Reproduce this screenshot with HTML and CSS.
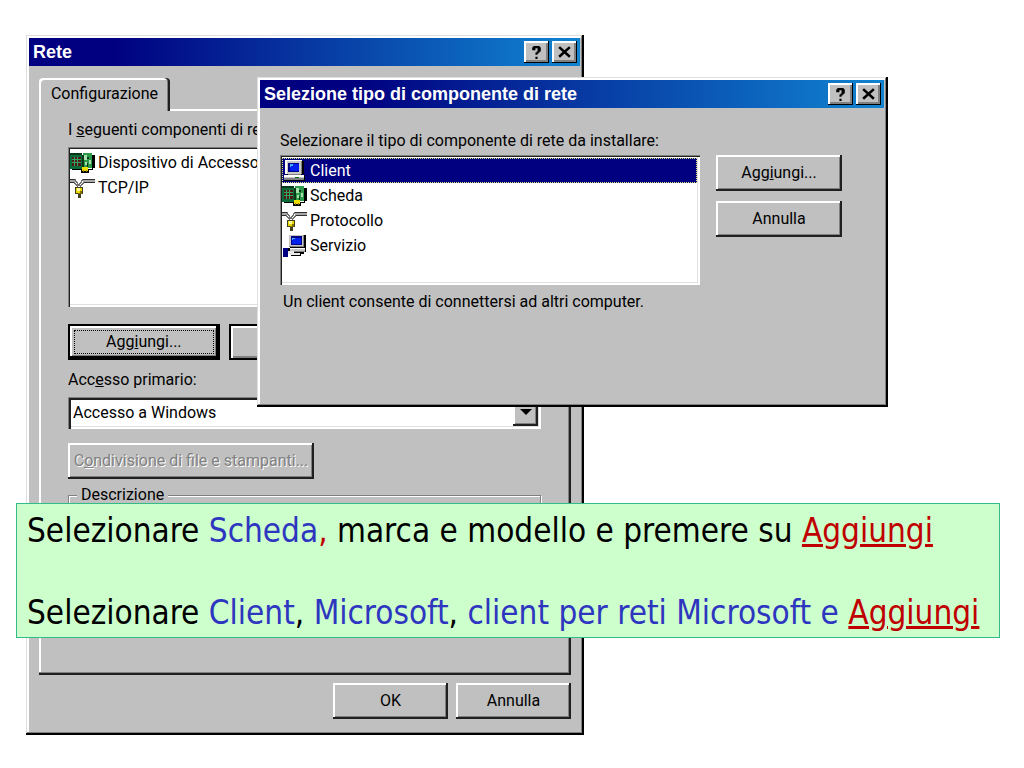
FILE: index.html
```html
<!DOCTYPE html>
<html lang="it">
<head>
<meta charset="utf-8">
<title>Configurazione di rete</title>
<link rel="stylesheet" href="styles.css">
</head>
<body>
<svg class="defs" aria-hidden="true">
  <symbol id="i-card" viewBox="0 0 25 20">
    <path fill="#000" d="M22 2h3v13h-2v2h-4v3h-8v-3H2v-1h20z"/>
    <path fill="#0a6a38" d="M0 0h12v16H0z"/>
    <path fill="#2c9a48" d="M13 0h9v15h-9z"/>
    <path fill="#063818" d="M0 0h12v2H0zM12 2h2v14h-2z"/>
    <path fill="#501818" d="M2 4h9v9H2z"/>
    <path fill="#30a860" d="M4 4h1v9H4zM7 4h1v9H7zM2 6h9v1H2zM2 9h9v1H2z"/>
    <path fill="#a8e0b0" d="M14 2h3v5h-3zM19 7h2v4h-2zM15 9h2v3h-2z"/>
    <path fill="#063818" d="M17 4h2v2h-2zM17 10h1v4h-1z"/>
    <path fill="#f0e000" d="M12 14h6v4h-6z"/>
    <path fill="#907800" d="M13 17h1v2h-1zM16 17h1v2h-1z"/>
  </symbol>
  <symbol id="i-protocol" viewBox="0 0 25 20">
    <path fill="#303030" d="M0 1h6v1H0zM12 1h13v1H12zM0 4h5v1H0zM14 4h11v1H14z"/>
    <path fill="#a8a8a8" d="M0 2h6v2H0zM13 2h12v2H13z"/>
    <path fill="none" stroke="#707070" stroke-width="1.4" d="M5 2l4 6M13 2L9 8M4 5l4 4M14 5l-4 4"/>
    <path fill="#404020" d="M5 9h8v7H5zM8 16h3v4H8z"/>
    <path fill="#e8d800" d="M6 10h6v5H6z"/>
    <path fill="#fff8a0" d="M7 10h3v3H7z"/>
    <path fill="#807000" d="M10 13h2v3H8v-1h2z"/>
  </symbol>
  <symbol id="i-client" viewBox="0 0 16 14">
    <path fill="#000" d="M13 1h1v8h-1zM3 9h10v1H3zM14 10h1v3h-1zM1 13h14v1H1z"/>
    <path fill="#c8c8c8" d="M2 0h11v9H2zM1 10h13v3H1z"/>
    <path fill="#fff" d="M2 0h11v1H2zM2 0h1v9H2zM1 10h13v1H1z"/>
    <path fill="#808080" d="M12 1h1v8h-1zM4 9h8v1H4zM1 12h13v1H1z"/>
    <path fill="#000080" d="M4 2h7v6H4z"/>
    <path fill="#0020f0" d="M5 3h6v4H5z"/>
    <path fill="#40b0ff" d="M5 3h2v1H5zM5 4h1v1H5z"/>
    <path fill="#107010" d="M8 11h3v1H8z"/>
  </symbol>
  <symbol id="i-service" viewBox="0 0 25 24">
    <path fill="#000" d="M22 1h2v12h1v6h-3v2h-3v2H9v-2H6v-4H4v-2h4v-2z"/>
    <path fill="#c8c8c8" d="M6 0h16v14H6zM8 15h15v4H8z"/>
    <path fill="#fff" d="M6 0h16v1H6zM6 0h1v14H6zM8 15h15v1H8z"/>
    <path fill="#808080" d="M21 1h1v13h-1zM7 13h15v1H7zM12 18h11v1H12z"/>
    <path fill="#000080" d="M9 2h11v9H9z"/>
    <path fill="#0020f0" d="M10 4h9v6h-9z"/>
    <path fill="#40b0ff" d="M10 4h3v1h-3zM10 5h1v1h-1z"/>
    <path fill="#000080" d="M0 15h6v9H0z"/>
    <path fill="#e8e8e8" d="M6 18h6v2h6v2H8v-1H6z"/>
  </symbol>
  <symbol id="i-help" viewBox="0 0 14 14">
    <path fill="#000" d="M4 1h6v1h1v4h-1v1H9v1H8v1H6V7h1V6h1V3H6v2H3V2h1zM6 11h2v2H6z"/>
  </symbol>
  <symbol id="i-close" viewBox="0 0 14 14">
    <path stroke="#000" stroke-width="2.4" fill="none" d="M2 2l10 9M12 2L2 11"/>
  </symbol>
</svg>

<main class="desktop">
  <section class="window window-network" aria-label="Rete">
    <header class="titlebar">
      <h1 class="title">Rete</h1>
      <button class="caption" aria-label="Guida"><svg class="glyph"><use href="#i-help"/></svg></button>
      <button class="caption" aria-label="Chiudi"><svg class="glyph"><use href="#i-close"/></svg></button>
    </header>
    <div class="network-body">
      <div class="tabs" role="tablist"><button class="tab" role="tab" aria-selected="true">Configurazione</button></div>
      <div class="panel" role="tabpanel">
        <p class="text" id="components"><span>I <u>s</u>eguenti componenti di rete</span></p>
        <ul class="list list-network" role="listbox" aria-labelledby="components">
          <li class="item" role="option"><svg class="icon"><use href="#i-card"/></svg>Dispositivo di Accesso</li>
          <li class="item" role="option"><svg class="icon"><use href="#i-protocol"/></svg>TCP/IP</li>
        </ul>
        <div class="actions">
          <button class="button default"><span class="focus">Agg<u>i</u>ungi...</span></button>
          <button class="button framed" aria-label="Rimuovi"></button>
          <button class="button framed" aria-label="Proprietà"></button>
        </div>
        <label class="text" for="logon">Acc<u>e</u>sso primario:</label>
        <div class="combo">
          <select class="select" id="logon"><option>Accesso a Windows</option></select>
          <span class="arrow"></span>
        </div>
        <button class="button share" disabled>C<u>o</u>ndivisione di file e stampanti...</button>
        <fieldset class="group"><legend>Descrizione</legend></fieldset>
      </div>
      <footer class="footer">
        <button class="button">OK</button>
        <button class="button">Annulla</button>
      </footer>
    </div>
  </section>

  <section class="window window-component" aria-label="Selezione tipo di componente di rete">
    <header class="titlebar">
      <h2 class="title">Selezione tipo di componente di rete</h2>
      <button class="caption" aria-label="Guida"><svg class="glyph"><use href="#i-help"/></svg></button>
      <button class="caption" aria-label="Chiudi"><svg class="glyph"><use href="#i-close"/></svg></button>
    </header>
    <div class="component-body">
      <p class="text" id="types">Selezionare il tipo di componente di rete da installare:</p>
      <div class="component-row">
        <ul class="list list-types" role="listbox" aria-labelledby="types">
          <li class="item selected" role="option" aria-selected="true"><svg class="icon"><use href="#i-client"/></svg>Client</li>
          <li class="item" role="option"><svg class="icon"><use href="#i-card"/></svg>Scheda</li>
          <li class="item" role="option"><svg class="icon"><use href="#i-protocol"/></svg>Protocollo</li>
          <li class="item" role="option"><svg class="icon"><use href="#i-service"/></svg>Servizio</li>
        </ul>
        <div class="stack">
          <button class="button">Agg<u>i</u>ungi...</button>
          <button class="button">Annulla</button>
        </div>
      </div>
      <p class="text hint">Un client consente di connettersi ad altri computer.</p>
    </div>
  </section>

  <aside class="note">
    <p>Selezionare <span class="blue">Scheda</span><span class="red">,</span> marca e modello e premere su <u class="red">Aggiungi</u></p>
    <p>Selezionare <span class="blue">Client</span>, <span class="blue">Microsoft</span>, <span class="blue">client per reti Microsoft e</span> <u class="red">Aggiungi</u></p>
  </aside>
</main>
</body>
</html>
```

FILE: styles.css
```css
* { box-sizing: border-box; }

body {
  margin: 0;
  background: #fff;
  color: #000;
  font: 16px/24px Roboto, "Liberation Sans", sans-serif;
}

h1, h2, p, ul { margin: 0; padding: 0; }
button, select { font: inherit; color: inherit; border: 0; border-radius: 0; }
.defs { position: absolute; width: 0; height: 0; }

.desktop { position: relative; min-height: 100vh; overflow: hidden; }

.window {
  position: absolute;
  display: flex;
  flex-direction: column;
  padding: 3px 4px 4px 3px;
  background: #c0c0c0;
  box-shadow: inset -2px -2px #000, inset 1px 1px #dfdfdf, inset -3px -3px #808080, inset 3px 3px #fff;
}
.window-network { left: 26px; top: 35px; width: 558px; }
.window-component { left: 257px; top: 77px; width: 631px; height: 330px; }

.titlebar {
  display: flex;
  align-items: center;
  height: 28px;
  padding: 0 3px 0 4px;
  background: linear-gradient(90deg, #000080 15%, #1084d0);
  color: #fff;
}
.title { flex: 1; font: bold 18px/28px "Liberation Sans", sans-serif; }
.caption {
  display: flex;
  align-items: center;
  justify-content: center;
  width: 25px;
  height: 22px;
  padding: 0;
  background: #c0c0c0;
  box-shadow: inset -1px -1px #000, inset 2px 2px #fff, inset -3px -3px #808080;
}
.caption + .caption { margin-left: 3px; }
.glyph { width: 15px; height: 15px; }

.network-body { display: flex; flex-direction: column; padding: 12px 9px 12px 10px; }
.tabs { display: flex; }
.tab {
  width: 131px;
  height: 33px;
  margin-bottom: -2px;
  padding: 0 0 2px;
  background: #c0c0c0;
  border-radius: 4px 4px 0 0;
  box-shadow: inset -2px 0 #202020, inset -3px 0 #808080, inset 2px 2px #fff;
  z-index: 1;
}
.panel {
  display: flex;
  flex-direction: column;
  align-items: stretch;
  height: 566px;
  padding: 9px 30px 0 29px;
  box-shadow: inset -2px -2px #202020, inset -3px -3px #808080, inset 2px 2px #fff;
}
.text { white-space: nowrap; }

.list {
  list-style: none;
  padding: 3px 3px 3px 2px;
  background: #fff;
  box-shadow: inset 1px 1px #808080, inset 2px 2px #202020, inset -2px -2px #fff, inset -3px -3px #dfdfdf;
}
.list-network { height: 160px; margin-top: 5px; }
.item { display: flex; align-items: center; gap: 3px; height: 25px; white-space: nowrap; }
.icon { width: 25px; height: 23px; shape-rendering: crispEdges; }
.selected { background: #000080; color: #fff; outline: 1px dotted #e0e080; outline-offset: -1px; }

.button {
  height: 36px;
  padding: 0;
  background: #c0c0c0;
  text-align: center;
  box-shadow: inset -2px -2px #202020, inset 2px 2px #fff, inset -3px -3px #808080;
}
.actions { display: grid; grid-template-columns: repeat(3, 1fr); gap: 9px; margin-top: 17px; }
.framed { box-shadow: inset 0 0 0 2px #000, inset 4px 4px #fff, inset -4px -4px #808080; }
.default {
  padding: 6px;
  box-shadow: inset 0 0 0 2px #000, inset -4px -4px #000, inset 4px 4px #fff, inset -5px -5px #808080;
}
.focus { display: block; line-height: 22px; border: 1px dotted #000; }
.panel label { margin-top: 8px; }
.combo {
  position: relative;
  height: 32px;
  margin-top: 5px;
  background: #fff;
  box-shadow: inset 1px 1px #808080, inset 3px 3px #202020, inset -2px -2px #fff, inset -3px -3px #dfdfdf;
}
.select { appearance: none; width: 100%; height: 32px; padding: 0 30px 0 5px; background: transparent; }
.arrow {
  position: absolute;
  right: 3px;
  top: 3px;
  width: 25px;
  height: 26px;
  background: #c0c0c0;
  box-shadow: inset -2px -2px #202020, inset 2px 2px #fff, inset -3px -3px #808080;
  pointer-events: none;
}
.arrow::after {
  content: "";
  position: absolute;
  left: 7px;
  top: 9px;
  border: 6px solid transparent;
  border-top-color: #000;
  border-bottom: 0;
}
.share { width: 246px; margin-top: 14px; color: #808080; text-shadow: 1px 1px #fff; }
.group {
  height: 140px;
  margin: 4px 0 0;
  padding: 0;
  border: 1px solid #808080;
  box-shadow: inset 1px 1px #fff, 1px 1px #fff;
}
.group legend { margin-left: 8px; padding: 0 4px; background: #c0c0c0; }
.footer { display: flex; justify-content: flex-end; gap: 8px; padding-top: 8px; }
.footer .button { width: 115px; }

.component-body { padding: 21px 20px 0; }
.component-row { display: flex; gap: 16px; margin-top: 2px; }
.list-types { width: 420px; height: 130px; }
.stack { display: flex; flex-direction: column; gap: 10px; width: 126px; }
.hint { margin-top: 5px; padding-left: 3px; }

.note {
  position: absolute;
  left: 16px;
  top: 503px;
  display: flex;
  flex-direction: column;
  gap: 41px;
  padding: 6px 20px 4px 10px;
  background: #ccffcc;
  border: 1px solid #33bb88;
  font: 33px/41px "DejaVu Sans Condensed", "Noto Sans", sans-serif;
  white-space: nowrap;
}
.blue { color: #2e36c0; }
.red { color: #c00000; }
```
